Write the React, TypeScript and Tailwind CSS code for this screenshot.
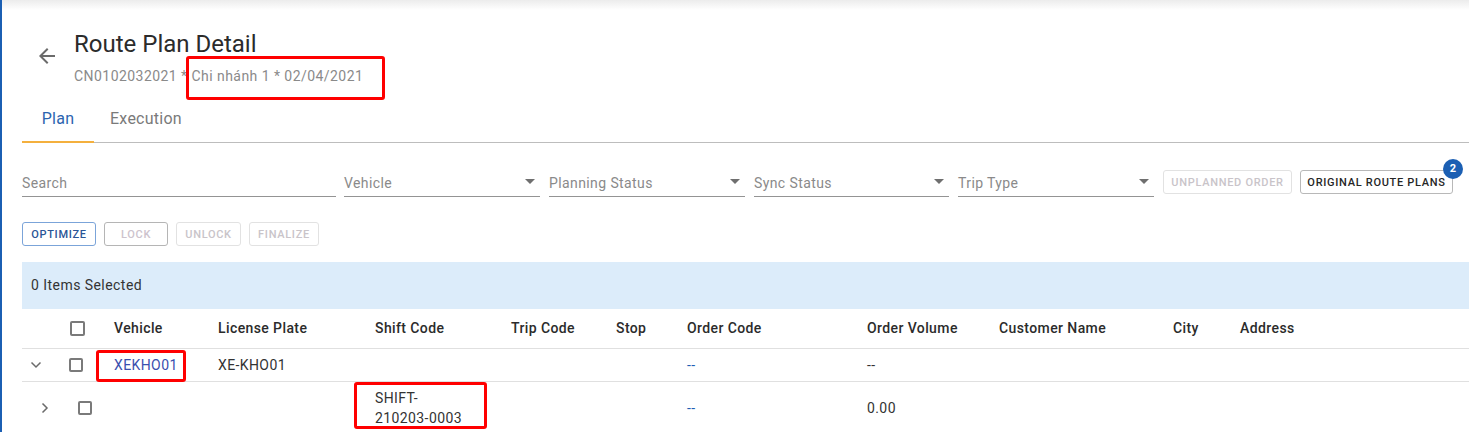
import React from "react";

const cols =
  "grid grid-cols-[38px_54px_104px_157px_136px_105px_71px_180px_132px_174px_67px_1fr]";

function Field({ label, width, select = true }: { label: string; width: string; select?: boolean }) {
  return (
    <div className={`${width} flex h-[33px] items-end justify-between border-b border-[#949494] pb-[3px]`}>
      <span className="text-[14px] leading-[20px] tracking-[0.4px] text-[#8a8a8a]">{label}</span>
      {select && (
        <svg width="10" height="5" viewBox="0 0 10 5" className="mb-[9px] mr-[5px]">
          <path d="M0 0h10L5 5z" fill="#6f6f6f" />
        </svg>
      )}
    </div>
  );
}

function Btn({ label, tone, width }: { label: string; tone: "primary" | "muted" | "faint" | "dark"; width: string }) {
  const styles = {
    primary: "border-[#7ba4d9] text-[#2a5596]",
    muted: "border-[#b5b5b5] text-[#cdc3cd]",
    faint: "border-[#e2e2e2] text-[#c9c4c9]",
    dark: "border-[#b8b8b8] text-[#262626]",
  }[tone];
  return (
    <button
      className={`flex h-[24px] ${width} items-center justify-center rounded-[3px] border text-[11px] font-medium uppercase leading-none tracking-[0.7px] ${styles}`}
    >
      {label}
    </button>
  );
}

function Check({ className = "" }: { className?: string }) {
  return <span className={`block rounded-[2px] border-2 border-[#7a7a7a] ${className}`} />;
}

export default function App() {
  return (
    <div className="relative h-[432px] w-full overflow-hidden border-l-2 border-[#1b5fb3] bg-white font-['Roboto',sans-serif] text-[#333]">
      <div className="h-[10px] bg-linear-to-b from-[#ececec] to-white" />

      <div className="pl-[20px]">
        {/* Header */}
        <div className="mt-[20px] flex">
          <svg width="24" height="24" viewBox="0 0 24 24" className="ml-[13px] mt-[14px]">
            <path d="M20 11H7.83l5.59-5.59L12 4l-8 8 8 8 1.41-1.41L7.83 13H20v-2z" fill="#6b6b6b" />
          </svg>
          <div className="ml-[15px]">
            <h1 className="text-[24px] leading-[28px] text-[#2b2b2b]">Route Plan Detail</h1>
            <p className="mt-[8px] text-[14px] leading-[20px] tracking-[0.45px] text-[#8a8a8a]">
              CN0102032021 * Chi nhánh 1 * 02/04/2021
            </p>
          </div>
        </div>

        {/* Tabs */}
        <div className="mt-[9px] flex h-[48px] border-b border-[#bdbdbd]">
          <div className="relative flex w-[72px] items-center justify-center text-[16px] tracking-[0.25px] text-[#2b64b0]">
            Plan
            <span className="absolute -bottom-px left-0 h-[2px] w-full bg-[#f4b03e]" />
          </div>
          <div className="flex items-center px-[16px] text-[16px] tracking-[0.25px] text-[#7a7a7a]">Execution</div>
        </div>

        {/* Filters */}
        <div className="mt-[21px] flex items-start">
          <Field label="Search" width="w-[314px]" select={false} />
          <div className="ml-[8px]"><Field label="Vehicle" width="w-[196px]" /></div>
          <div className="ml-[9px]"><Field label="Planning Status" width="w-[196px]" /></div>
          <div className="ml-[9px]"><Field label="Sync Status" width="w-[195px]" /></div>
          <div className="ml-[9px]"><Field label="Trip Type" width="w-[196px]" /></div>
          <div className="ml-[9px] mt-[6px]">
            <Btn label="Unplanned Order" tone="faint" width="w-[129px]" />
          </div>
          <div className="relative ml-[8px] mt-[6px]">
            <Btn label="Original Route Plans" tone="dark" width="w-[153px]" />
            <span className="absolute -right-[10px] -top-[11px] flex h-[20px] w-[20px] items-center justify-center rounded-full bg-[#1b5fb3] text-[11px] font-bold text-white">
              2
            </span>
          </div>
        </div>

        {/* Actions */}
        <div className="mt-[25px] flex gap-[8px]">
          <Btn label="Optimize" tone="primary" width="w-[74px]" />
          <Btn label="Lock" tone="muted" width="w-[64px]" />
          <Btn label="Unlock" tone="faint" width="w-[65px]" />
          <Btn label="Finalize" tone="faint" width="w-[70px]" />
        </div>

        {/* Selection bar */}
        <div className="mt-[16px] flex h-[47px] items-center bg-[#dcecfa] pl-[9px] text-[14px] tracking-[0.45px] text-[#333]">
          0 Items Selected
        </div>

        {/* Table */}
        <div className={`${cols} h-[40px] items-center border-b border-[#e0e0e0] text-[14px] font-medium tracking-[0.4px] text-[#2b2b2b]`}>
          <span />
          <Check className="ml-[10px] h-[15px] w-[15px]" />
          <span>Vehicle</span>
          <span>License Plate</span>
          <span>Shift Code</span>
          <span>Trip Code</span>
          <span>Stop</span>
          <span>Order Code</span>
          <span>Order Volume</span>
          <span>Customer Name</span>
          <span>City</span>
          <span>Address</span>
        </div>

        <div className={`${cols} h-[33px] items-center border-b border-[#e0e0e0] text-[14px] tracking-[0.4px]`}>
          <svg width="12" height="8" viewBox="0 0 12 8" className="ml-[8px]">
            <path d="M1.5 1.5L6 6l4.5-4.5" stroke="#6b6b6b" strokeWidth="1.5" fill="none" />
          </svg>
          <Check className="ml-[9px] h-[14px] w-[14px]" />
          <span className="text-[#3a4fae]">XEKHO01</span>
          <span>XE-KHO01</span>
          <span />
          <span />
          <span />
          <span className="text-[#1f5fb5]">--</span>
          <span>--</span>
          <span />
          <span />
          <span />
        </div>

        <div className={`${cols} items-center py-[6px] text-[14px] leading-[20px] tracking-[0.4px]`}>
          <svg width="8" height="12" viewBox="0 0 8 12" className="ml-[19px]">
            <path d="M1.5 1.5L6 6l-4.5 4.5" stroke="#6b6b6b" strokeWidth="1.5" fill="none" />
          </svg>
          <Check className="ml-[18px] h-[14px] w-[14px]" />
          <span />
          <span />
          <span>
            SHIFT-
            <br />
            210203-0003
          </span>
          <span />
          <span />
          <span className="text-[#1f5fb5]">--</span>
          <span>0.00</span>
          <span />
          <span />
          <span />
        </div>
      </div>

      {/* Annotation boxes */}
      <div className="absolute left-[184px] top-[56px] h-[44px] w-[199px] rounded-[3px] border-[3px] border-[#ff0000]" />
      <div className="absolute left-[94px] top-[350px] h-[32px] w-[90px] rounded-[3px] border-[3px] border-[#ff0000]" />
      <div className="absolute left-[352px] top-[382px] h-[47px] w-[133px] rounded-[3px] border-[3px] border-[#ff0000]" />
    </div>
  );
}
